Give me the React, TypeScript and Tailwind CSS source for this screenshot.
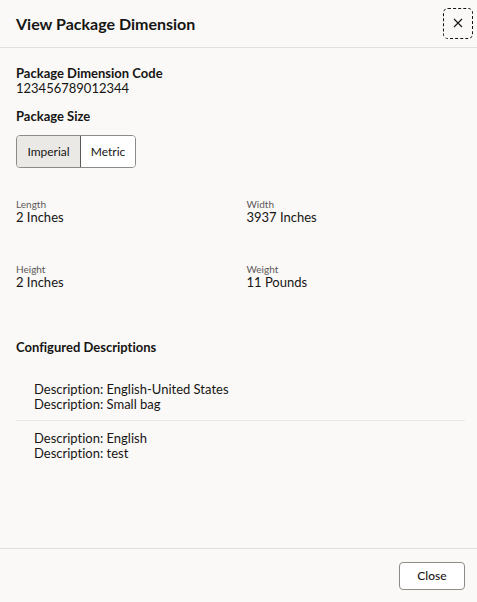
import React from 'react';

const fields = [
  { label: 'Length', value: '2 Inches' },
  { label: 'Width', value: '3937 Inches' },
  { label: 'Height', value: '2 Inches' },
  { label: 'Weight', value: '11 Pounds' },
];

const descriptions = [
  ['Description: English-United States', 'Description: Small bag'],
  ['Description: English', 'Description: test'],
];

const App: React.FC = () => {
  return (
    <div
      className="w-[477px] h-[602px] bg-[#faf9f8] text-[#161513] flex flex-col [font-variant-ligatures:none]"
      style={{ fontFamily: 'Lato, "Noto Sans", sans-serif' }}
    >
      {/* Cabecera */}
      <div className="h-[48px] flex items-center justify-between pl-4 pr-[4px] border-b border-[#e2dfdc]">
        <h2 className="text-[16px] font-bold">View Package Dimension</h2>
        <button className="w-[30px] h-[31px] flex items-center justify-center border border-dashed border-[#161513] rounded-[5px] mb-[1px]">
          <svg width="10" height="10" viewBox="0 0 10 10">
            <path d="M1 1 L9 9 M9 1 L1 9" stroke="#161513" strokeWidth="1.1" />
          </svg>
        </button>
      </div>

      {/* Contenido */}
      <div className="flex-1 px-4 pt-[18px]">
        <p className="text-[13px] font-bold leading-[15px]">Package Dimension Code</p>
        <p className="text-[13px] leading-[15px]">123456789012344</p>

        <p className="text-[13px] font-bold leading-[15px] mt-[13px]">Package Size</p>
        <div className="mt-[11px] flex w-[120px] h-[33px] border border-[#8e8b87] rounded-[4px] overflow-hidden text-[12px]">
          <div className="w-[64px] flex items-center justify-center bg-[#ebe9e6] border-r border-[#5b5855]">
            Imperial
          </div>
          <div className="flex-1 flex items-center justify-center bg-white">Metric</div>
        </div>

        <div className="grid grid-cols-2 gap-y-[38px] mt-[30px]">
          {fields.map((f) => (
            <div key={f.label} className={f.label === 'Width' || f.label === 'Weight' ? 'pl-[8px]' : ''}>
              <p className="text-[10px] leading-[12px] text-[#5b5855]">{f.label}</p>
              <p className="text-[13px] leading-[15px]">{f.value}</p>
            </div>
          ))}
        </div>

        <p className="text-[13px] font-bold leading-[15px] mt-[50px]">Configured Descriptions</p>

        <div className="mt-[27px] mr-[-4px]">
          {descriptions.map((d, i) => (
            <div
              key={i}
              className={`pl-[18px] ${i === 0 ? 'pb-[8px] border-b border-[#e9e7e4]' : 'pt-[10px]'}`}
            >
              {d.map((line) => (
                <p key={line} className="text-[13px] leading-[15px]">{line}</p>
              ))}
            </div>
          ))}
        </div>
      </div>

      {/* Pie */}
      <div className="h-[54px] border-t border-[#e2dfdc] flex items-center justify-end pr-3">
        <button className="w-[66px] h-[28px] border border-[#8e8b87] rounded-[4px] bg-white text-[12px] font-medium">
          Close
        </button>
      </div>
    </div>
  );
};

export default App;
